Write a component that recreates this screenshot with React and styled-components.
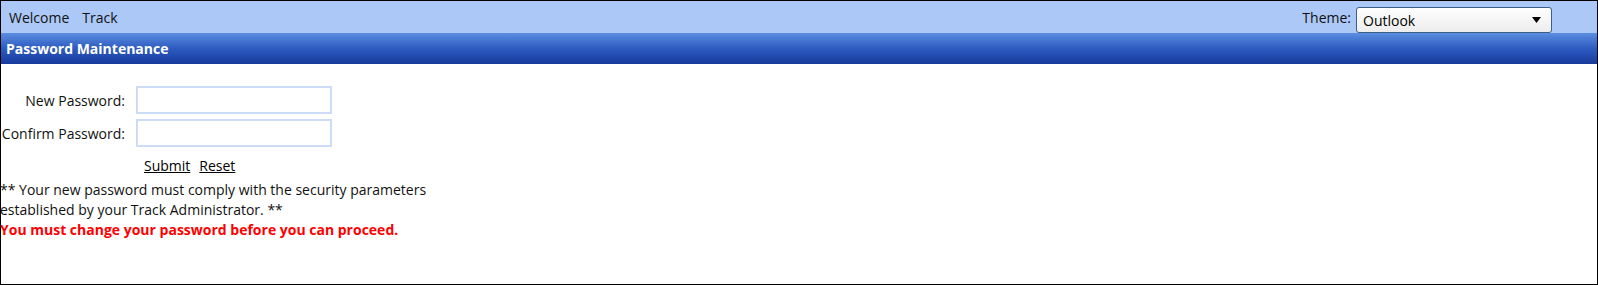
import React from 'react'
import styled, { createGlobalStyle } from 'styled-components'

const Global = createGlobalStyle`
    html, body {
        margin: 0;
        padding: 0;
        background: #fff;
    }
    body {
        font-family: 'Open Sans', 'Noto Sans', sans-serif;
        font-size: 13px;
        color: #000;
    }
`

const Frame = styled.div`
    box-sizing: border-box;
    width: 1598px;
    height: 285px;
    border: 1px solid #000;
    overflow: hidden;
    background: #fff;
`

const TopBar = styled.div`
    height: 32px;
    background: #abc8f6;
    display: flex;
    align-items: center;
    justify-content: space-between;
    padding: 0 45px 0 8px;
`

const Nav = styled.div`
    display: flex;
    gap: 13px;
    font-size: 14px;
    color: #111;
`

const NavItem = styled.span`
    cursor: pointer;
`

const ThemeBox = styled.label`
    display: flex;
    align-items: center;
    gap: 5px;
    font-size: 14px;
    color: #111;
`

const Select = styled.div`
    box-sizing: border-box;
    width: 196px;
    height: 26px;
    margin-top: 6px;
    border: 1px solid #3d5f86;
    border-radius: 3px;
    background: linear-gradient(#ffffff, #ececec);
    display: flex;
    align-items: center;
    justify-content: space-between;
    padding: 0 10px 0 6px;
    font-size: 14px;
    color: #000;
`

const Header = styled.div`
    height: 31px;
    background: linear-gradient(#5b8de0, #2d5bc0 50%, #173b9c);
    color: #fff;
    font-weight: bold;
    font-size: 14px;
    display: flex;
    align-items: center;
    padding-left: 5px;
`

const Body = styled.div`
    padding-top: 22px;
`

const Form = styled.div`
    display: grid;
    grid-template-columns: 124px 196px;
    column-gap: 11px;
    row-gap: 5px;
    align-items: center;
`

const Label = styled.span`
    text-align: right;
    font-size: 14px;
    color: #111;
`

const Input = styled.input`
    box-sizing: border-box;
    width: 196px;
    height: 28px;
    border: 2px solid #cddcf6;
    background: #fff;
    outline: none;
`

const Actions = styled.div`
    display: flex;
    gap: 9px;
    margin: 9px 0 0 143px;
    font-size: 14px;
`

const Link = styled.a`
    color: #000;
    text-decoration: underline;
    cursor: pointer;
`

const Note = styled.p`
    margin: 5px 0 0 -1px;
    width: 440px;
    font-size: 14px;
    line-height: 20px;
    color: #111;
`

const Warning = styled.div`
    margin-left: -1px;
    font-size: 14px;
    line-height: 20px;
    font-weight: bold;
    color: #ff0000;
`

const Caret = () => (
    <svg width="9" height="6" viewBox="0 0 9 6">
        <path d="M0 0 L9 0 L4.5 6 Z" fill="#000" />
    </svg>
)

const App = () => {
    return (
        <Frame>
            <Global />
            <TopBar>
                <Nav>
                    <NavItem>Welcome</NavItem>
                    <NavItem>Track</NavItem>
                </Nav>
                <ThemeBox>
                    Theme:
                    <Select>
                        <span>Outlook</span>
                        <Caret />
                    </Select>
                </ThemeBox>
            </TopBar>
            <Header>Password Maintenance</Header>
            <Body>
                <Form>
                    <Label>New Password:</Label>
                    <Input type="password" />
                    <Label>Confirm Password:</Label>
                    <Input type="password" />
                </Form>
                <Actions>
                    <Link>Submit</Link>
                    <Link>Reset</Link>
                </Actions>
                <Note>
                    ** Your new password must comply with the security
                    parameters established by your Track Administrator. **
                </Note>
                <Warning>You must change your password before you can proceed.</Warning>
            </Body>
        </Frame>
    )
}

export default App
